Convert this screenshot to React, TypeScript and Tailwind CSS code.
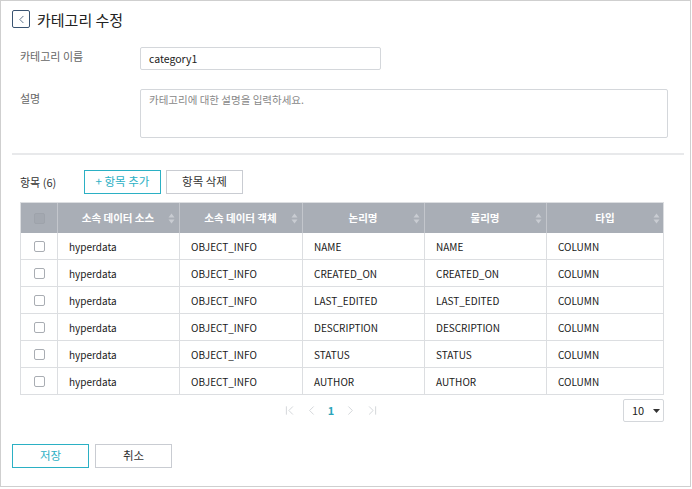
import { ChevronLeft, ChevronRight, ChevronFirst, ChevronLast } from "lucide-react";

const ROWS = [
  ["hyperdata", "OBJECT_INFO", "NAME", "NAME", "COLUMN"],
  ["hyperdata", "OBJECT_INFO", "CREATED_ON", "CREATED_ON", "COLUMN"],
  ["hyperdata", "OBJECT_INFO", "LAST_EDITED", "LAST_EDITED", "COLUMN"],
  ["hyperdata", "OBJECT_INFO", "DESCRIPTION", "DESCRIPTION", "COLUMN"],
  ["hyperdata", "OBJECT_INFO", "STATUS", "STATUS", "COLUMN"],
  ["hyperdata", "OBJECT_INFO", "AUTHOR", "AUTHOR", "COLUMN"],
];

const HEADS = ["소속 데이터 소스", "소속 데이터 객체", "논리명", "물리명", "타입"];

function SortIcon() {
  return (
    <svg width="7" height="11" viewBox="0 0 7 11" className="shrink-0">
      <path d="M3.5 0.5 L6.5 4.5 L0.5 4.5 Z" fill="#c9ccd2" />
      <path d="M3.5 10.5 L6.5 6.5 L0.5 6.5 Z" fill="#c9ccd2" />
    </svg>
  );
}

function Checkbox({ header }: { header?: boolean }) {
  return (
    <div
      className={
        header
          ? "w-[11px] h-[11px] rounded-[2px] border border-[#9ea3ab] bg-[#a3a8b0]"
          : "w-[11px] h-[11px] rounded-[2px] border border-[#a9adb3] bg-white"
      }
    />
  );
}

export default function App() {
  return (
    <div className="w-[691px] h-[487px] border border-[#cfcfcf] bg-white text-[#333] font-['Noto_Sans_CJK_KR','Noto_Sans',sans-serif]">
      {/* header */}
      <div className="flex items-center gap-[7px] pl-[11px] pt-[9px] h-[27px]">
        <div className="w-[18px] h-[18px] border border-[#3a5472] rounded-[2px] flex items-center justify-center">
          <ChevronLeft size={13} strokeWidth={1.5} color="#3a5472" />
        </div>
        <span className="text-[15px] leading-none text-[#222]">카테고리 수정</span>
      </div>

      {/* form */}
      <div className="pl-[19px] pr-[22px]">
        <div className="flex items-center mt-[19px]">
          <span className="w-[120px] text-[11px] text-[#666] -mt-[5px]">카테고리 이름</span>
          <div className="w-[241px] h-[23px] border border-[#d4d7db] rounded-[2px] flex items-center px-[8px] text-[10.5px] text-[#222]">
            category1
          </div>
        </div>
        <div className="flex mt-[19px]">
          <span className="w-[120px] text-[11px] text-[#666] pt-[1px]">설명</span>
          <div className="w-[528px] h-[49px] border border-[#d4d7db] rounded-[2px] px-[8px] pt-[2px] text-[10.5px] text-[#888]">
            카테고리에 대한 설명을 입력하세요.
          </div>
        </div>
      </div>

      <div className="ml-[11px] mr-[6px] mt-[15px] h-[2px] bg-[#e8e9eb]" />

      {/* items */}
      <div className="pl-[19px] pr-[26px]">
        <div className="flex items-center mt-[15px] h-[24px]">
          <span className="w-[64px] text-[11px] text-[#333]">항목 (6)</span>
          <button className="w-[77px] h-[24px] border border-[#2bb0c4] text-[11.5px] text-[#2bb0c4] bg-white">
            + 항목 추가
          </button>
          <button className="ml-[5px] w-[77px] h-[24px] border border-[#c9ccd2] text-[11.5px] text-[#333] bg-white">
            항목 삭제
          </button>
        </div>

        <div className="mt-[8px] border border-[#dcdee1]">
          <div className="grid grid-cols-[37px_122px_123px_122px_122px_117px] h-[30px] bg-[#a9aeb6] text-white text-[10.5px] font-bold">
            <div className="flex items-center justify-center border-r border-[#c3c6cc]">
              <Checkbox header />
            </div>
            {HEADS.map((h, i) => (
              <div
                key={i}
                className={
                  i < HEADS.length - 1
                    ? "flex items-center pl-[10px] pr-[4px] border-r border-[#c3c6cc]"
                    : "flex items-center pl-[10px] pr-[4px]"
                }
              >
                <span className="flex-1 text-center">{h}</span>
                <SortIcon />
              </div>
            ))}
          </div>
          {ROWS.map((row, r) => (
            <div
              key={r}
              className={
                r < ROWS.length - 1
                  ? "grid grid-cols-[37px_122px_123px_122px_122px_117px] h-[27px] border-b border-[#dcdee1] text-[10px] text-[#1a1a1a]"
                  : "grid grid-cols-[37px_122px_123px_122px_122px_117px] h-[26px] text-[10px] text-[#1a1a1a]"
              }
            >
              <div className="flex items-center justify-center border-r border-[#dcdee1]">
                <Checkbox />
              </div>
              {row.map((c, i) => (
                <div
                  key={i}
                  className={
                    i < row.length - 1
                      ? "flex items-center pl-[11px] border-r border-[#dcdee1]"
                      : "flex items-center pl-[11px]"
                  }
                >
                  {c}
                </div>
              ))}
            </div>
          ))}
        </div>

        {/* pagination */}
        <div className="relative flex items-center justify-center h-[23px] mt-[4px]">
          <div className="flex items-center gap-[7px] text-[#c6c9ce] -ml-[22px]">
            <ChevronFirst size={15} strokeWidth={1.2} />
            <ChevronLeft size={15} strokeWidth={1.2} />
            <span className="text-[11px] font-bold text-[#2ba5ba] w-[10px] text-center">1</span>
            <ChevronRight size={15} strokeWidth={1.2} />
            <ChevronLast size={15} strokeWidth={1.2} />
          </div>
          <div className="absolute right-0 top-0 w-[41px] h-[23px] border border-[#d4d7db] rounded-[2px] flex items-center pl-[8px] gap-[9px] text-[11px] text-[#222]">
            10
            <svg width="7" height="4" viewBox="0 0 7 4">
              <path d="M0 0 L7 0 L3.5 4 Z" fill="#333" />
            </svg>
          </div>
        </div>
      </div>

      {/* footer buttons */}
      <div className="flex gap-[6px] pl-[11px] mt-[22px]">
        <button className="w-[77px] h-[24px] border border-[#2bb0c4] text-[11.5px] text-[#2bb0c4] bg-white">
          저장
        </button>
        <button className="w-[77px] h-[24px] border border-[#c9ccd2] text-[11.5px] text-[#333] bg-white">
          취소
        </button>
      </div>
    </div>
  );
}
